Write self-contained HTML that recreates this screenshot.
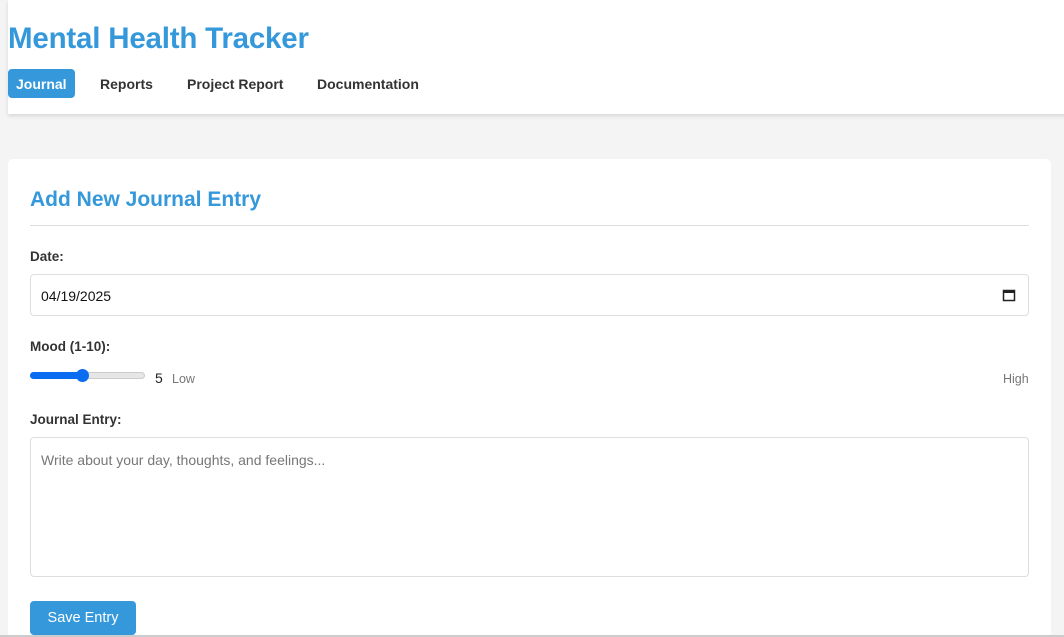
<!DOCTYPE html>
<html><head><style>
html,body{margin:0;height:637px;overflow:hidden}
body{background:#f4f4f4;font-family:"Liberation Sans",sans-serif;width:1064px;position:relative}
.hdr{position:absolute;left:8px;top:0;width:1070px;height:114px;background:#fff;box-shadow:0 2px 4px rgba(0,0,0,.12)}
h1{position:absolute;left:0;top:22px;margin:0;font-size:29.5px;font-weight:bold;color:#3498db;letter-spacing:-0.2px}
.nav{position:absolute;top:69px;left:0;font-size:14px;font-weight:bold;color:#333}
.nav span{position:absolute;top:0;height:29px;line-height:31px;white-space:nowrap}
.act{background:#3498db;color:#fff;border-radius:4px;padding:0 8px}
.card{position:absolute;left:8px;top:159px;width:1043px;height:476px;background:#fff;border-radius:5px 5px 0 0}
h2{position:absolute;left:22px;top:29px;margin:0;font-size:21px;color:#3498db;font-weight:bold}
.hr{position:absolute;left:22px;right:22px;top:66px;border-top:1px solid #ddd}
.lbl{position:absolute;left:22px;font-size:13.5px;font-weight:bold;color:#333}
.inp{position:absolute;left:22px;width:997px;border:1px solid #ddd;border-radius:4px;background:#fff}
.ph{position:absolute;font-size:14px}
.btn{position:absolute;left:22px;top:442px;width:106px;height:34px;background:#3498db;border-radius:4px;color:#fff;font-size:14.5px;line-height:34px;text-align:center}
.bot{position:absolute;left:0;top:635px;width:1064px;height:2px;background:#ccc}
</style></head><body>
<div class="hdr">
<h1>Mental Health Tracker</h1>
<div class="nav">
<span class="act" style="left:0">Journal</span>
<span style="left:92px">Reports</span>
<span style="left:179px">Project Report</span>
<span style="left:309px">Documentation</span>
</div></div>
<div class="card">
<h2>Add New Journal Entry</h2>
<div class="hr"></div>
<div class="lbl" style="top:90px">Date:</div>
<div class="inp" style="top:115px;height:40px">
<span class="ph" style="left:10px;top:13px;color:#111">04/19/2025</span>
<svg style="position:absolute;right:12px;top:13px" width="14" height="14" viewBox="0 0 14 14"><rect x="1.5" y="2.5" width="11" height="10" fill="none" stroke="#222" stroke-width="1.5"/><rect x="1.5" y="2.5" width="11" height="2.5" fill="#222"/></svg>
</div>
<div class="lbl" style="top:180px">Mood (1-10):</div>
<div style="position:absolute;left:22px;top:213px;width:115px;height:7px;border-radius:4px;background:#e6e6e6;border:1px solid #ccc;box-sizing:border-box"></div>
<div style="position:absolute;left:22px;top:213px;width:52px;height:7px;border-radius:4px;background:#0a6cf0"></div>
<div style="position:absolute;left:68px;top:210px;width:13px;height:13px;border-radius:50%;background:#0a6cf0"></div>
<span class="ph" style="left:147px;top:211px;color:#222">5</span>
<span class="ph" style="left:164px;top:213px;color:#777;font-size:12.5px">Low</span>
<span class="ph" style="left:995px;top:213px;color:#777;font-size:12.5px">High</span>
<div class="lbl" style="top:253px">Journal Entry:</div>
<div class="inp" style="top:278px;height:138px">
<span class="ph" style="left:10px;top:14px;color:#777">Write about your day, thoughts, and feelings...</span>
</div>
<div class="btn">Save Entry</div>
</div>
<div class="bot"></div>
</body></html>
